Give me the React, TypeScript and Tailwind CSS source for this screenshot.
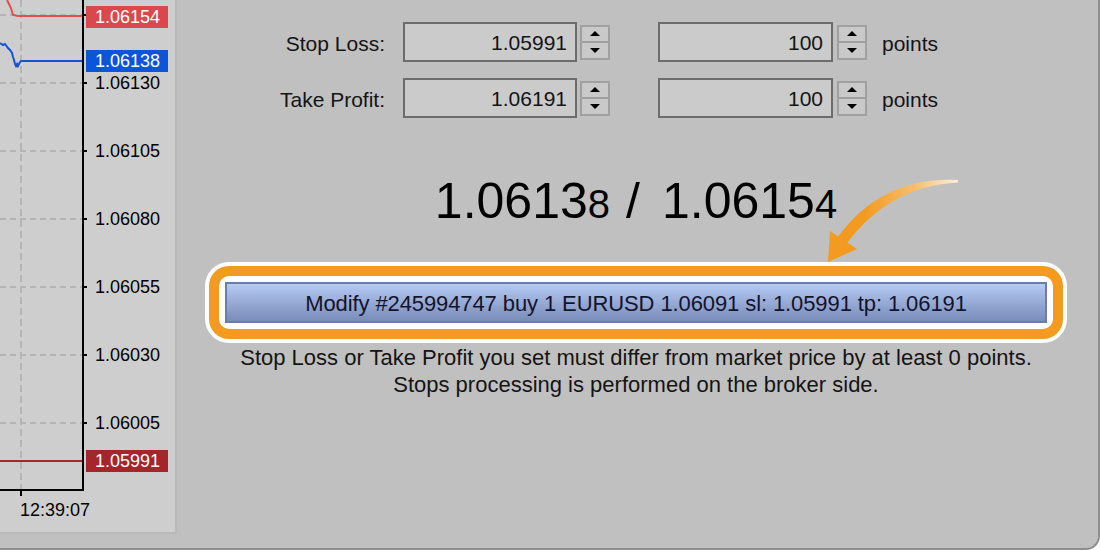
import React from "react";

const gridYs = [15, 83, 151, 219, 287, 355, 423];
const axisLabels: [number, string][] = [
  [83, "1.06130"],
  [151, "1.06105"],
  [219, "1.06080"],
  [287, "1.06055"],
  [355, "1.06030"],
  [423, "1.06005"],
];

function Spinner({ ml }: { ml: string }) {
  return (
    <div className={`${ml} w-[30px] h-[35px] border-2 border-[#a0a0a0] bg-[#c9c9c9] flex flex-col`}>
      <div className="flex-1 flex items-center justify-center border-b-2 border-[#a0a0a0]">
        <div className="w-0 h-0 border-l-[5px] border-r-[5px] border-b-[5px] border-l-transparent border-r-transparent border-b-black" />
      </div>
      <div className="flex-1 flex items-center justify-center">
        <div className="w-0 h-0 border-l-[5px] border-r-[5px] border-t-[5px] border-l-transparent border-r-transparent border-t-black" />
      </div>
    </div>
  );
}

function Field({ value, w }: { value: string; w: string }) {
  return (
    <div className={`${w} h-[40px] border-2 border-[#6c6c6c] bg-[#cbcbcb] flex items-center justify-end pr-[8px] pt-[2px] text-[21px] text-[#141414]`}>
      {value}
    </div>
  );
}

function Row({ label, price, className }: { label: string; price: string; className?: string }) {
  return (
    <div className={`flex items-center h-[40px] ${className ?? ""}`}>
      <div className="w-[208px] pt-[3px] text-right text-[21px] text-[#141414]">{label}</div>
      <div className="ml-[18px]">
        <Field value={price} w="w-[174px]" />
      </div>
      <Spinner ml="ml-[3px]" />
      <div className="ml-[48px]">
        <Field value="100" w="w-[175px]" />
      </div>
      <Spinner ml="ml-[4px]" />
      <div className="ml-[15px] pt-[3px] text-[21px] text-[#141414]">points</div>
    </div>
  );
}

function Chart() {
  return (
    <div className="relative w-[177px] h-[534px] shrink-0 bg-[#cecece] border-r-2 border-b-2 border-[#b9b9b9]">
      <svg className="absolute left-0 top-0" width="175" height="532">
        {gridYs.map((y) => (
          <line key={y} x1="0" y1={y} x2="82" y2={y} stroke="#b4b4b4" strokeWidth="2" strokeDasharray="6 4" />
        ))}
        <line x1="21" y1="0" x2="21" y2="489" stroke="#b4b4b4" strokeWidth="2" strokeDasharray="7 4" />
        <polyline points="7,0 11,8 13,15 18,16 83,16" fill="none" stroke="#df5150" strokeWidth="2" />
        <polyline
          points="0,43 3,45 5,44 8,48 10,50 12,53 13,57 14,60 15,64 16,66 17,64 18,66 20,62 21,61 83,61"
          fill="none"
          stroke="#1553d6"
          strokeWidth="2"
        />
        <line x1="0" y1="461" x2="83" y2="461" stroke="#a5282b" strokeWidth="2" />
        <line x1="83" y1="0" x2="83" y2="491" stroke="#000" strokeWidth="2" />
        <line x1="0" y1="490" x2="84" y2="490" stroke="#000" strokeWidth="2" />
        {gridYs.map((y) => (
          <line key={"t" + y} x1="83" y1={y} x2="87" y2={y} stroke="#000" strokeWidth="2" />
        ))}
        <line x1="21" y1="490" x2="21" y2="496" stroke="#000" strokeWidth="2" />
      </svg>
      {axisLabels.map(([y, t]) => (
        <div
          key={t}
          className="absolute left-[95px] h-[22px] leading-[22px] text-[18px] text-black"
          style={{ top: y - 11 }}
        >
          {t}
        </div>
      ))}
      <div className="absolute left-[86px] top-[6px] w-[82px] h-[22px] leading-[22px] pl-[9px] bg-[#d9494c] text-white text-[18px]">
        1.06154
      </div>
      <div className="absolute left-[86px] top-[50px] w-[82px] h-[22px] leading-[22px] pl-[9px] bg-[#0a55d9] text-white text-[18px]">
        1.06138
      </div>
      <div className="absolute left-[86px] top-[450px] w-[82px] h-[22px] leading-[22px] pl-[9px] bg-[#a5262a] text-white text-[18px]">
        1.05991
      </div>
      <div className="absolute left-[20px] top-[499px] h-[22px] leading-[22px] text-[18px] text-black">12:39:07</div>
    </div>
  );
}

function Arrow() {
  return (
    <svg className="absolute left-0 top-0 pointer-events-none" width="1100" height="550">
      <defs>
        <linearGradient id="tail" gradientUnits="userSpaceOnUse" x1="958" y1="181" x2="862" y2="205">
          <stop offset="0" stopColor="#fdeed8" />
          <stop offset="0.45" stopColor="#f7bd6a" />
          <stop offset="1" stopColor="#f39a20" />
        </linearGradient>
      </defs>
      <path d="M 958 180 Q 882 176 837 238 L 847 243 Q 890 186 958 182.5 Z" fill="url(#tail)" />
      <path d="M 828 262 L 830 231 L 857 249 Z" fill="#f39a20" />
    </svg>
  );
}

export default function App() {
  return (
    <div className="relative w-[1100px] h-[550px] overflow-hidden bg-[#c0c0c0] border-r-2 border-b-2 border-[#8f8f8f] rounded-br-[14px] flex font-['Liberation_Sans',Arial,sans-serif]">
      <Chart />
      <div className="flex-1 flex flex-col pt-[22px] pr-[3px]">
        <Row label="Stop Loss:" price="1.05991" />
        <Row label="Take Profit:" price="1.06191" className="mt-[16px]" />
        <div className="mt-[58px] h-[50px] leading-[50px] text-center text-black whitespace-nowrap">
          <span className="text-[50px]">1.0613</span>
          <span className="text-[40px]">8</span>
          <span className="text-[50px] ml-[16px] mr-[22px]">/</span>
          <span className="text-[50px]">1.0615</span>
          <span className="text-[40px]">4</span>
        </div>
        <div className="mt-[36px] mx-auto rounded-[24px] bg-white p-[4px]">
          <div className="rounded-[20px] bg-[#f39a20] p-[10px]">
            <div className="rounded-[10px] bg-white p-[6px]">
              <div className="w-[822px] h-[41px] border-2 border-[#6a7dab] bg-linear-to-b from-[#b5caf4] to-[#7a8cb9] flex items-center justify-center pt-[1px] text-[22px] tracking-[-0.1px] text-[#14142a] whitespace-nowrap">
                Modify #245994747 buy 1 EURUSD 1.06091 sl: 1.05991 tp: 1.06191
              </div>
            </div>
          </div>
        </div>
        <div className="mt-[1px] text-center text-[22px] leading-[27px] text-[#141414]">
          <div>Stop Loss or Take Profit you set must differ from market price by at least 0 points.</div>
          <div>Stops processing is performed on the broker side.</div>
        </div>
      </div>
      <Arrow />
    </div>
  );
}
